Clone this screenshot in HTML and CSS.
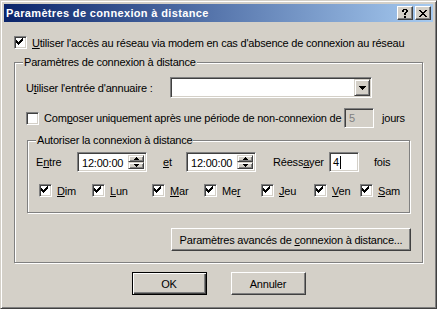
FILE: index.html
```html
<!DOCTYPE html>
<html lang="fr">
<head>
<meta charset="utf-8">
<title>Paramètres de connexion à distance</title>
<link rel="stylesheet" href="styles.css">
</head>
<body>
<div class="window">
  <div class="titlebar">
    <span class="title">Paramètres de connexion à distance</span>
    <div class="caps">
      <span class="cap"><svg width="6" height="9" viewBox="0 0 6 9" shape-rendering="crispEdges"><path d="M1 0h4v1H1zM0 1h2v2H0zM4 1h2v2H4zM3 3h2v1H3zM2 4h2v2H2zM2 7h2v2H2z" fill="#000"/></svg></span>
      <span class="cap"><svg width="8" height="7" viewBox="0 0 8 7" shape-rendering="crispEdges"><path d="M0 0h2v1H0zM6 0h2v1H6zM1 1h2v1H1zM5 1h2v1H5zM2 2h4v1H2zM3 3h2v1H3zM2 4h4v1H2zM1 5h2v1H1zM5 5h2v1H5zM0 6h2v1H0zM6 6h2v1H6z" fill="#000"/></svg></span>
    </div>
  </div>
  <div class="body">
    <div class="row chk-row">
      <span class="cb"><svg width="13" height="13" viewBox="0 0 13 13" shape-rendering="crispEdges"><path d="M2 4h1v3H2zM3 5h1v3H3zM4 6h1v3H4zM5 5h1v3H5zM6 4h1v3H6zM7 3h1v3H7zM8 2h1v3H8z" fill="#000"/></svg></span>
      <span><u>U</u>tiliser l'accès au réseau via modem en cas d'absence de connexion au réseau</span>
    </div>

    <fieldset class="group outer">
      <legend>Paramètres de connexion à distance</legend>
      <div class="gbody outer-body">
        <div class="row dir-row">
          <span class="dir-label">U<u>t</u>iliser l'entrée d'annuaire :</span>
          <div class="field combo">
            <span class="combo-text"></span>
            <span class="raised dd-btn"><svg width="7" height="4" viewBox="0 0 7 4" shape-rendering="crispEdges"><path d="M0 0h7v1H0zM1 1h5v1H1zM2 2h3v1H2zM3 3h1v1H3z" fill="#000"/></svg></span>
          </div>
        </div>

        <div class="row idle-row">
          <span class="cb"></span>
          <span class="idle-text">Com<u>p</u>oser uniquement après une période de non-connexion de</span>
          <span class="field small disabled"><span>5</span></span>
          <span class="jours">jours</span>
        </div>

        <fieldset class="group inner">
          <legend>Autoriser la connexion à distance</legend>
          <div class="gbody inner-body">
            <div class="row time-row">
              <span class="entre">E<u>n</u>tre</span>
              <div class="field spin">
                <span class="spin-text">12:00:00</span>
                <span class="spin-btns">
                  <span class="raised sb"><svg width="5" height="3" viewBox="0 0 5 3" shape-rendering="crispEdges"><path d="M2 0h1v1H2zM1 1h3v1H1zM0 2h5v1H0z" fill="#000"/></svg></span>
                  <span class="raised sb"><svg width="5" height="3" viewBox="0 0 5 3" shape-rendering="crispEdges"><path d="M0 0h5v1H0zM1 1h3v1H1zM2 2h1v1H2z" fill="#000"/></svg></span>
                </span>
              </div>
              <span class="et"><u>e</u>t</span>
              <div class="field spin">
                <span class="spin-text">12:00:00</span>
                <span class="spin-btns">
                  <span class="raised sb"><svg width="5" height="3" viewBox="0 0 5 3" shape-rendering="crispEdges"><path d="M2 0h1v1H2zM1 1h3v1H1zM0 2h5v1H0z" fill="#000"/></svg></span>
                  <span class="raised sb"><svg width="5" height="3" viewBox="0 0 5 3" shape-rendering="crispEdges"><path d="M0 0h5v1H0zM1 1h3v1H1zM2 2h1v1H2z" fill="#000"/></svg></span>
                </span>
              </div>
              <span class="retry">Réess<u>a</u>yer</span>
              <span class="field small retry-field"><span>4</span><span class="caret"></span></span>
              <span class="fois">fois</span>
            </div>

            <div class="days">
              <span class="day"><span class="cb"><svg width="13" height="13" viewBox="0 0 13 13" shape-rendering="crispEdges"><path d="M2 4h1v3H2zM3 5h1v3H3zM4 6h1v3H4zM5 5h1v3H5zM6 4h1v3H6zM7 3h1v3H7zM8 2h1v3H8z" fill="#000"/></svg></span><span><u>D</u>im</span></span>
              <span class="day"><span class="cb"><svg width="13" height="13" viewBox="0 0 13 13" shape-rendering="crispEdges"><path d="M2 4h1v3H2zM3 5h1v3H3zM4 6h1v3H4zM5 5h1v3H5zM6 4h1v3H6zM7 3h1v3H7zM8 2h1v3H8z" fill="#000"/></svg></span><span><u>L</u>un</span></span>
              <span class="day"><span class="cb"><svg width="13" height="13" viewBox="0 0 13 13" shape-rendering="crispEdges"><path d="M2 4h1v3H2zM3 5h1v3H3zM4 6h1v3H4zM5 5h1v3H5zM6 4h1v3H6zM7 3h1v3H7zM8 2h1v3H8z" fill="#000"/></svg></span><span><u>M</u>ar</span></span>
              <span class="day"><span class="cb"><svg width="13" height="13" viewBox="0 0 13 13" shape-rendering="crispEdges"><path d="M2 4h1v3H2zM3 5h1v3H3zM4 6h1v3H4zM5 5h1v3H5zM6 4h1v3H6zM7 3h1v3H7zM8 2h1v3H8z" fill="#000"/></svg></span><span>Me<u>r</u></span></span>
              <span class="day"><span class="cb"><svg width="13" height="13" viewBox="0 0 13 13" shape-rendering="crispEdges"><path d="M2 4h1v3H2zM3 5h1v3H3zM4 6h1v3H4zM5 5h1v3H5zM6 4h1v3H6zM7 3h1v3H7zM8 2h1v3H8z" fill="#000"/></svg></span><span><u>J</u>eu</span></span>
              <span class="day"><span class="cb"><svg width="13" height="13" viewBox="0 0 13 13" shape-rendering="crispEdges"><path d="M2 4h1v3H2zM3 5h1v3H3zM4 6h1v3H4zM5 5h1v3H5zM6 4h1v3H6zM7 3h1v3H7zM8 2h1v3H8z" fill="#000"/></svg></span><span><u>V</u>en</span></span>
              <span class="day"><span class="cb"><svg width="13" height="13" viewBox="0 0 13 13" shape-rendering="crispEdges"><path d="M2 4h1v3H2zM3 5h1v3H3zM4 6h1v3H4zM5 5h1v3H5zM6 4h1v3H6zM7 3h1v3H7zM8 2h1v3H8z" fill="#000"/></svg></span><span><u>S</u>am</span></span>
            </div>
          </div>
        </fieldset>

        <div class="adv-row">
          <span class="btn adv"><span>Paramètres avancés de <u>c</u>onnexion à distance...</span></span>
        </div>
      </div>
    </fieldset>

    <div class="dlg-btns">
      <span class="btn default"><span>OK</span></span>
      <span class="btn"><span>Annuler</span></span>
    </div>
  </div>
</div>
</body>
</html>
```

FILE: styles.css
```css
* { box-sizing: border-box; }
html, body { margin: 0; padding: 0; }
body {
  width: 437px;
  height: 309px;
  overflow: hidden;
  background: #D4D0C8;
  font-family: "Liberation Sans", Arial, sans-serif;
  font-size: 11px;
  letter-spacing: -0.2px;
  color: #000;
}
u { text-decoration: underline; text-underline-offset: 1px; }
svg { display: block; }

.window {
  width: 437px;
  height: 309px;
  background: #D4D0C8;
  border: 1px solid;
  border-color: #D4D0C8 #404040 #404040 #D4D0C8;
  box-shadow: inset 1px 1px 0 #fff, inset -1px -1px 0 #808080;
  padding: 3px;
  display: flex;
  flex-direction: column;
}

.titlebar {
  height: 18px;
  flex: none;
  background: linear-gradient(to right, #0A246A, #A6CAF0);
  display: flex;
  align-items: center;
  padding: 0 2px 0 2px;
}
.title {
  flex: 1;
  color: #fff;
  font-weight: bold;
  letter-spacing: 0.35px;
  line-height: 18px;
  white-space: nowrap;
}
.caps { display: flex; gap: 2px; }
.cap {
  width: 16px;
  height: 14px;
  background: #D4D0C8;
  border: 1px solid;
  border-color: #fff #404040 #404040 #fff;
  box-shadow: inset -1px -1px 0 #808080;
  display: flex;
  align-items: center;
  justify-content: center;
  padding-right: 1px;
}

.body {
  flex: 1;
  padding: 14px 10px 0 10px;
}

.row {
  display: flex;
  align-items: center;
  white-space: nowrap;
}
.chk-row { height: 13px; gap: 5px; }

.cb {
  width: 13px;
  height: 13px;
  flex: none;
  background: #fff;
  border: 1px solid;
  border-color: #808080 #fff #fff #808080;
  box-shadow: inset 1px 1px 0 #404040, inset -1px -1px 0 #D4D0C8;
  position: relative;
}
.cb svg { position: absolute; left: -1px; top: -1px; }

.group {
  margin: 0;
  padding: 0;
  min-width: 0;
  border: 1px solid #808080;
  box-shadow: inset 1px 1px 0 #fff, 1px 1px 0 #fff;
}
.group legend {
  margin-left: 8px;
  padding: 0 1px;
  line-height: 13px;
  background: #D4D0C8;
  white-space: nowrap;
}
.outer {
  margin-top: 7px;
  width: 409px;
  height: 207px;
}
.outer-body { padding: 8px 11px 0 11px; }

.dir-row { height: 21px; }
.dir-label { width: 144px; flex: none; }

.field {
  background: #fff;
  border: 1px solid;
  border-color: #808080 #fff #fff #808080;
  box-shadow: inset 1px 1px 0 #404040, inset -1px -1px 0 #D4D0C8;
}
.combo {
  width: 202px;
  height: 21px;
  display: flex;
  padding: 1px;
}
.combo-text { flex: 1; }
.raised {
  background: #D4D0C8;
  border: 1px solid;
  border-color: #D4D0C8 #404040 #404040 #D4D0C8;
  box-shadow: inset 1px 1px 0 #fff, inset -1px -1px 0 #808080;
  display: flex;
  align-items: center;
  justify-content: center;
}
.dd-btn { width: 16px; height: 17px; padding-top: 1px; }

.idle-row { margin-top: 10px; height: 20px; }
.idle-row .cb { margin-right: 5px; }
.idle-text { width: 300px; flex: none; }
.small {
  width: 30px;
  height: 20px;
  padding: 0 0 0 4px;
  line-height: 18px;
  display: flex;
  align-items: center;
}
.disabled { background: #D4D0C8; color: #808080; }
.jours { margin-left: 8px; }

.inner {
  margin-top: 6px;
  margin-left: 1px;
  width: 383px;
  height: 79px;
}
.inner-body { padding: 5px 0 0 8px; }

.time-row { height: 20px; }
.entre { width: 41px; flex: none; }
.spin {
  width: 70px;
  height: 20px;
  display: flex;
  padding: 2px 2px 2px 4px;
}
.spin-text { flex: 1; line-height: 16px; }
.spin-btns { display: flex; flex-direction: column; width: 16px; }
.sb { width: 16px; height: 8px; }
.et { margin-left: 16px; width: 23px; flex: none; }
.retry { margin-left: 17px; width: 56px; flex: none; }
.retry-field { padding-left: 3px; }
.caret { width: 1px; height: 13px; background: #000; margin-left: 1px; }
.fois { margin-left: 15px; }

.days {
  margin: 12px 0 0 3px;
  height: 13px;
  display: grid;
  grid-template-columns: 53px 60px 52px 57px 53px 46px auto;
  white-space: nowrap;
}
.day { display: flex; align-items: center; gap: 5px; }

.adv-row {
  margin-top: 15px;
  display: flex;
  justify-content: flex-end;
}
.btn {
  height: 23px;
  display: flex;
  align-items: center;
  justify-content: center;
  background: #D4D0C8;
  border: 1px solid;
  border-color: #fff #404040 #404040 #fff;
  box-shadow: inset -1px -1px 0 #808080;
  white-space: nowrap;
}
.adv { width: 240px; }

.dlg-btns {
  margin-top: 9px;
  display: flex;
  justify-content: center;
  gap: 24px;
}
.dlg-btns .btn { width: 75px; }
.btn.default {
  border-color: #000;
  box-shadow: inset 1px 1px 0 #fff, inset -1px -1px 0 #404040, inset -2px -2px 0 #808080;
}
```
